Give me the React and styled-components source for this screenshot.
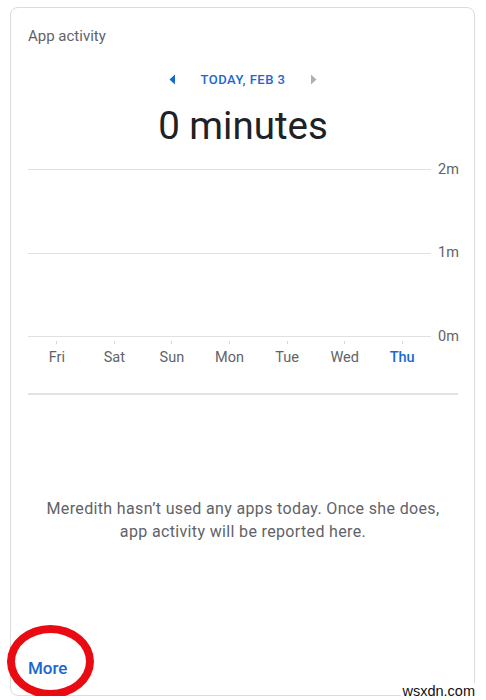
import React from 'react';
import styled, { createGlobalStyle } from 'styled-components';

const GlobalStyle = createGlobalStyle`
  body {
    margin: 0;
    background: #ffffff;
    font-family: Roboto, "Liberation Sans", Arial, sans-serif;
  }
`;

const BLUE = '#1a67d2';
const GREY = '#5f6368';

const Card = styled.div`
  position: relative;
  box-sizing: border-box;
  margin: 7px 11px 0 10px;
  height: 689px;
  border: 1px solid #dcdcdc;
  border-radius: 8px;
  display: flex;
  flex-direction: column;
  padding: 0 16px 0 17px;
`;

const Title = styled.div`
  margin-top: 18px;
  font-size: 15px;
  line-height: 20px;
  color: ${GREY};
`;

const DateNav = styled.div`
  margin-top: 23px;
  display: flex;
  justify-content: center;
  align-items: center;
  gap: 25px;
  height: 20px;
`;

const DateLabel = styled.span`
  font-size: 13px;
  font-weight: 500;
  letter-spacing: 0.5px;
  color: ${BLUE};
`;

const Minutes = styled.div`
  margin-top: 13px;
  text-align: center;
  font-size: 38.5px;
  line-height: 48px;
  color: #202124;
`;

const Chart = styled.div`
  margin-top: 19px;
  display: flex;
  flex-direction: column;
`;

const GridRow = styled.div`
  display: flex;
  align-items: center;
  height: 1px;
  margin-top: ${(p) => (p.$first ? 0 : '82.5px')};
`;

const GridLine = styled.div`
  flex: 1;
  height: 1px;
  background: #e0e0e0;
`;

const AxisLabel = styled.span`
  width: 20px;
  padding-left: 7px;
  font-size: 14.5px;
  line-height: 16px;
  color: ${GREY};
`;

const DayAxis = styled.div`
  display: grid;
  grid-template-columns: repeat(7, 1fr);
  margin-right: 27px;
`;

const Day = styled.div`
  display: flex;
  flex-direction: column;
  align-items: center;
`;

const Tick = styled.div`
  margin-top: 4px;
  width: 1px;
  height: 3px;
  background: #d6d6d6;
`;

const DayName = styled.span`
  margin-top: 5px;
  font-size: 14.5px;
  line-height: 18px;
  color: ${(p) => (p.$active ? BLUE : GREY)};
  font-weight: ${(p) => (p.$active ? 500 : 400)};
`;

const Separator = styled.div`
  margin-top: 26px;
  height: 2px;
  background: #e3e3e3;
`;

const Message = styled.p`
  margin: 102px 0 0;
  text-align: center;
  font-size: 16px;
  letter-spacing: 0.35px;
  line-height: 23px;
  color: ${GREY};
`;

const MoreLink = styled.a`
  margin-top: auto;
  margin-bottom: 17px;
  font-size: 17px;
  line-height: 20px;
  font-weight: 500;
  color: ${BLUE};
  text-decoration: none;
`;

const Circle = styled.div`
  position: absolute;
  left: -4px;
  top: 617px;
  width: 87px;
  height: 73px;
  box-sizing: border-box;
  border: 8px solid #ea0a12;
  border-radius: 50%;
  pointer-events: none;
`;

const Watermark = styled.span`
  position: absolute;
  right: -2px;
  bottom: -4px;
  font-family: "Liberation Sans", Arial, sans-serif;
  font-size: 14.5px;
  color: #111;
  background: #fff;
  padding: 0 1px;
`;

const Arrow = ({ dir, color }) => (
  <svg width="7" height="11" viewBox="0 0 7 11">
    {dir === 'left' ? (
      <path d="M6 0.5 L0.5 5.5 L6 10.5 Z" fill={color} />
    ) : (
      <path d="M1 0.5 L6.5 5.5 L1 10.5 Z" fill={color} />
    )}
  </svg>
);

const days = ['Fri', 'Sat', 'Sun', 'Mon', 'Tue', 'Wed', 'Thu'];
const levels = ['2m', '1m', '0m'];

export default function App() {
  return (
    <>
      <GlobalStyle />
      <Card>
        <Title>App activity</Title>
        <DateNav>
          <Arrow dir="left" color={BLUE} />
          <DateLabel>TODAY, FEB 3</DateLabel>
          <Arrow dir="right" color="#b0b0b0" />
        </DateNav>
        <Minutes>0 minutes</Minutes>
        <Chart>
          {levels.map((l, i) => (
            <GridRow key={l} $first={i === 0}>
              <GridLine />
              <AxisLabel>{l}</AxisLabel>
            </GridRow>
          ))}
          <DayAxis>
            {days.map((d) => (
              <Day key={d}>
                <Tick />
                <DayName $active={d === 'Thu'}>{d}</DayName>
              </Day>
            ))}
          </DayAxis>
        </Chart>
        <Separator />
        <Message>
          Meredith hasn’t used any apps today. Once she does,
          <br />
          app activity will be reported here.
        </Message>
        <MoreLink href="#">More</MoreLink>
        <Circle />
        <Watermark>wsxdn.com</Watermark>
      </Card>
    </>
  );
}
